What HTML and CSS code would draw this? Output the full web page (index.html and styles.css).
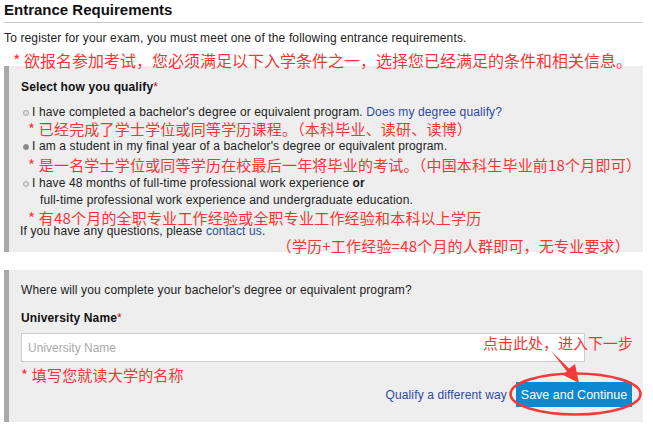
FILE: index.html
```html
<!DOCTYPE html>
<html lang="en">
<head>
<meta charset="utf-8">
<title>Entrance Requirements</title>
<link rel="stylesheet" href="styles.css">
</head>
<body>
<div class="page">
  <h1 class="title">Entrance Requirements</h1>
  <p class="intro">To register for your exam, you must meet one of the following entrance requirements.</p>
  <p class="note note-top">* 欲报名参加考试，您必须满足以下入学条件之一，选择您已经满足的条件和相关信息。</p>

  <section class="box box-qualify">
    <h2 class="label">Select how you qualify<span class="req">*</span></h2>
    <div class="option opt1"><span class="radio"></span><span>I have completed a bachelor's degree or equivalent program. <a class="link" href="#">Does my degree qualify?</a></span></div>
    <p class="note note-in n1">* 已经完成了学士学位或同等学历课程。（本科毕业、读研、读博）</p>
    <div class="option opt2"><span class="radio radio-on"></span><span>I am a student in my final year of a bachelor's degree or equivalent program.</span></div>
    <p class="note note-in n2">* 是一名学士学位或同等学历在校最后一年将毕业的考试。（中国本科生毕业前18个月即可）</p>
    <div class="option opt3"><span class="radio"></span><span>I have 48 months of full-time professional work experience <b>or</b><br><span class="indent">full-time professional work experience and undergraduate education.</span></span></div>
    <p class="note note-in n3">* 有48个月的全职专业工作经验或全职专业工作经验和本科以上学历</p>
    <p class="questions">If you have any questions, please <a class="link" href="#">contact us</a>.</p>
    <p class="note note-right">（学历+工作经验=48个月的人群即可，无专业要求）</p>
  </section>

  <section class="box box-uni">
    <p class="question">Where will you complete your bachelor's degree or equivalent program?</p>
    <h2 class="label label-uni">University Name<span class="req">*</span></h2>
    <input class="field" type="text" placeholder="University Name">
    <p class="note note-field">* 填写您就读大学的名称</p>
    <div class="actions">
      <a class="link alt" href="#">Qualify a different way</a>
      <button class="btn" type="button">Save and Continue</button>
    </div>
  </section>

  <p class="note callout">点击此处，进入下一步</p>
  <svg class="marks" width="653" height="429" viewBox="0 0 653 429" aria-hidden="true">
    <ellipse cx="575.5" cy="394" rx="65" ry="20.5" fill="none" stroke="#f23a3a" stroke-width="2.6"/>
    <polygon points="551,351 569,368.5 575,364 579,383 562,374.5 567,371.5" fill="#f23a3a"/>
  </svg>
</div>
</body>
</html>
```

FILE: styles.css
```css
* { box-sizing: border-box; }
html, body { margin: 0; padding: 0; background: #fff; }
body {
  font-family: "Liberation Sans", Arial, sans-serif;
  font-size: 12px;
  letter-spacing: 0.13px;
  color: #222;
}
.page {
  position: relative;
  width: 653px;
  height: 429px;
  padding-left: 4px;
  overflow: hidden;
}
p, h1, h2 { margin: 0; }
.title {
  width: 639px;
  font-size: 15px;
  font-weight: bold;
  letter-spacing: 0;
  line-height: 20px;
  padding-bottom: 2px;
  border-bottom: 1px solid #c8c8c8;
  color: #111;
}
.intro {
  margin-top: 8px;
  line-height: 15px;
}
.note {
  font-family: "Noto Sans CJK SC", "Noto Sans", sans-serif;
  color: #f33636;
  font-size: 15px;
  letter-spacing: 0.2px;
  line-height: 17px;
}
.note-top {
  font-size: 16px;
  letter-spacing: 0;
  line-height: 16px;
  margin-top: 6px;
  margin-left: 9px;
  margin-bottom: -2px;
  position: relative;
  z-index: 1;
}
.box {
  width: 639px;
  background: #eeeeee;
  border-left: 5px solid #a9a9a9;
  padding-left: 12px;
}
.box-qualify {
  height: 186px;
  padding-top: 14px;
}
.label {
  font-size: 12px;
  font-weight: bold;
  line-height: 15px;
  color: #111;
}
.req { color: #b22222; font-weight: normal; }
.option {
  display: flex;
  align-items: flex-start;
  line-height: 15px;
}
.opt1 { margin-top: 10px; }
.opt2 { margin-top: 2px; }
.opt3 { margin-top: 2px; line-height: 17px; }
.radio {
  flex: none;
  width: 6px;
  height: 6px;
  margin: 5px 3px 0 2px;
  border-radius: 50%;
  background: #e2e2e2;
  border: 1px solid #a5a5a5;
}
.opt3 .radio { margin-top: 6px; }
.radio-on { background: #8a8a8a; border-color: #8a8a8a; }
.indent { padding-left: 8px; }
.note-in { margin-left: 7px; }
.n2 { margin-top: 2px; }
.n3 { margin-top: 1px; line-height: 15px; }
.questions {
  line-height: 13px;
  margin-top: 0;
  margin-left: -1px;
}
.note-right {
  text-align: right;
  padding-right: 13px;
  line-height: 15px;
}
.link { color: #2b4a9e; text-decoration: none; }
.box-uni {
  margin-top: 18px;
  height: 152px;
  padding-top: 13px;
}
.question { line-height: 15px; }
.label-uni { margin-top: 13px; }
.field {
  display: block;
  margin-top: 7px;
  width: 564px;
  height: 29px;
  border: 1px solid #cccccc;
  background: #fff;
  padding: 0 6px;
  font-family: "Liberation Sans", Arial, sans-serif;
  font-size: 12px;
  color: #222;
}
.field::placeholder { color: #aaaaaa; }
.note-field { margin-top: 4px; }
.actions {
  display: flex;
  justify-content: flex-end;
  align-items: center;
  gap: 9px;
  margin-top: -1px;
  padding-right: 11px;
}
.alt { font-size: 12px; }
.btn {
  height: 25px;
  width: 116px;
  border: 0;
  padding: 0;
  background: #0b88cf;
  color: #fff;
  font-family: "Liberation Sans", Arial, sans-serif;
  font-size: 12.5px;
  letter-spacing: 0;
}
.callout {
  position: absolute;
  left: 483px;
  top: 334px;
  z-index: 2;
  letter-spacing: 0;
}
.marks {
  position: absolute;
  left: 0;
  top: 0;
  pointer-events: none;
  z-index: 3;
}
```
